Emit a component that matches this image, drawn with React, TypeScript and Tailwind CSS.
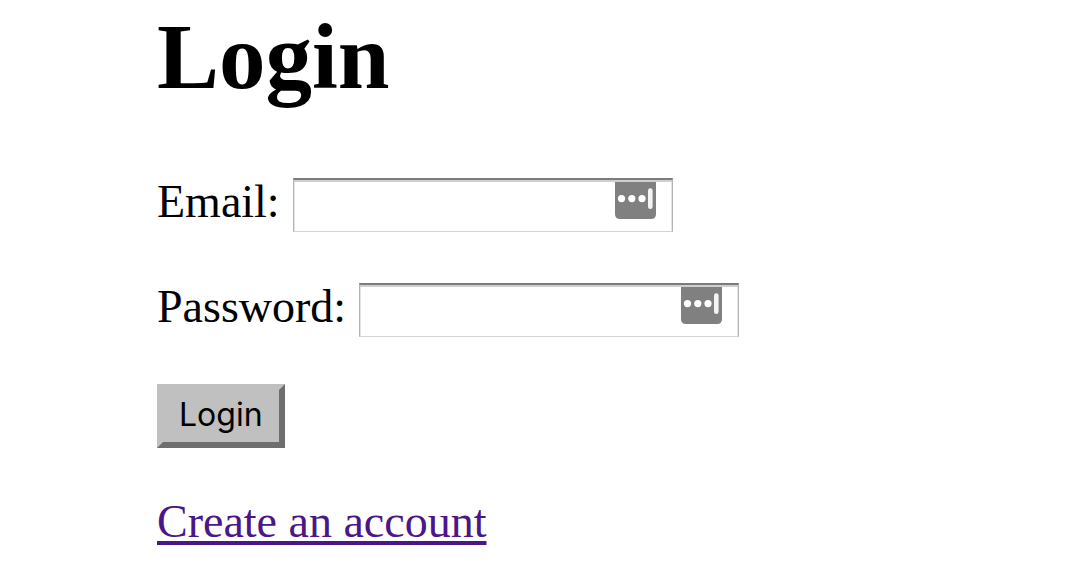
import { useId } from "react";

function AutofillIcon() {
  return (
    <svg viewBox="0 0 41 37" className="h-[37px] w-[41px]" aria-hidden="true">
      <path d="M0 0H41V32Q41 37 36 37H5Q0 37 0 32Z" fill="#808080" />
      <circle cx="6.5" cy="16.6" r="3.6" fill="#fff" />
      <circle cx="16.8" cy="16.6" r="3.6" fill="#fff" />
      <circle cx="27" cy="16.6" r="3.6" fill="#fff" />
      <rect x="33" y="6.2" width="4.6" height="20.8" rx="2.3" fill="#f3f3f3" />
    </svg>
  );
}

function Field({ label, type }: { label: string; type: string }) {
  const id = useId();
  return (
    <div className="flex items-baseline gap-[13px]">
      <label htmlFor={id} className="leading-[44px]">
        {label}
      </label>
      <div className="relative flex items-baseline">
        <input
          id={id}
          type={type}
          className="h-[54px] w-[380px] border border-t-2 border-x-[#b4b4b4] border-t-[#7c7c7c] border-b-[#d4d4d4] bg-white pr-16 pl-2 font-['Inter',sans-serif] text-[32px] shadow-[inset_0_2px_0_#cfcfcf,inset_1px_0_0_#e4e4e4,inset_-1px_0_0_#e4e4e4] outline-none"
        />
        <span className="pointer-events-none absolute top-1 right-[17px]">
          <AutofillIcon />
        </span>
      </div>
    </div>
  );
}

export default function App() {
  return (
    <main className="bg-white pt-1 pl-[157px] font-['Liberation_Serif','Times_New_Roman',serif] text-[46px] text-black">
      <h1 className="text-[93px] leading-[106px] font-bold">Login</h1>
      <form className="mt-[68px]" onSubmit={(e) => e.preventDefault()}>
        <div className="flex flex-col gap-[51px]">
          <Field label="Email:" type="email" />
          <Field label="Password:" type="password" />
        </div>
        <button
          type="submit"
          className="mt-[47px] block h-[64px] border-[6px] border-t-[#c0c0c0] border-r-[#6e6e6e] border-b-[#6e6e6e] border-l-[#c0c0c0] bg-[#c0c0c0] px-4 pb-0.5 font-['Inter',sans-serif] text-[32px] leading-[50px]"
        >
          Login
        </button>
      </form>
      <p className="mt-12 leading-[52px]">
        <a href="#create-account" className="text-[#4b1688] underline decoration-4 underline-offset-4">
          Create an account
        </a>
      </p>
    </main>
  );
}
